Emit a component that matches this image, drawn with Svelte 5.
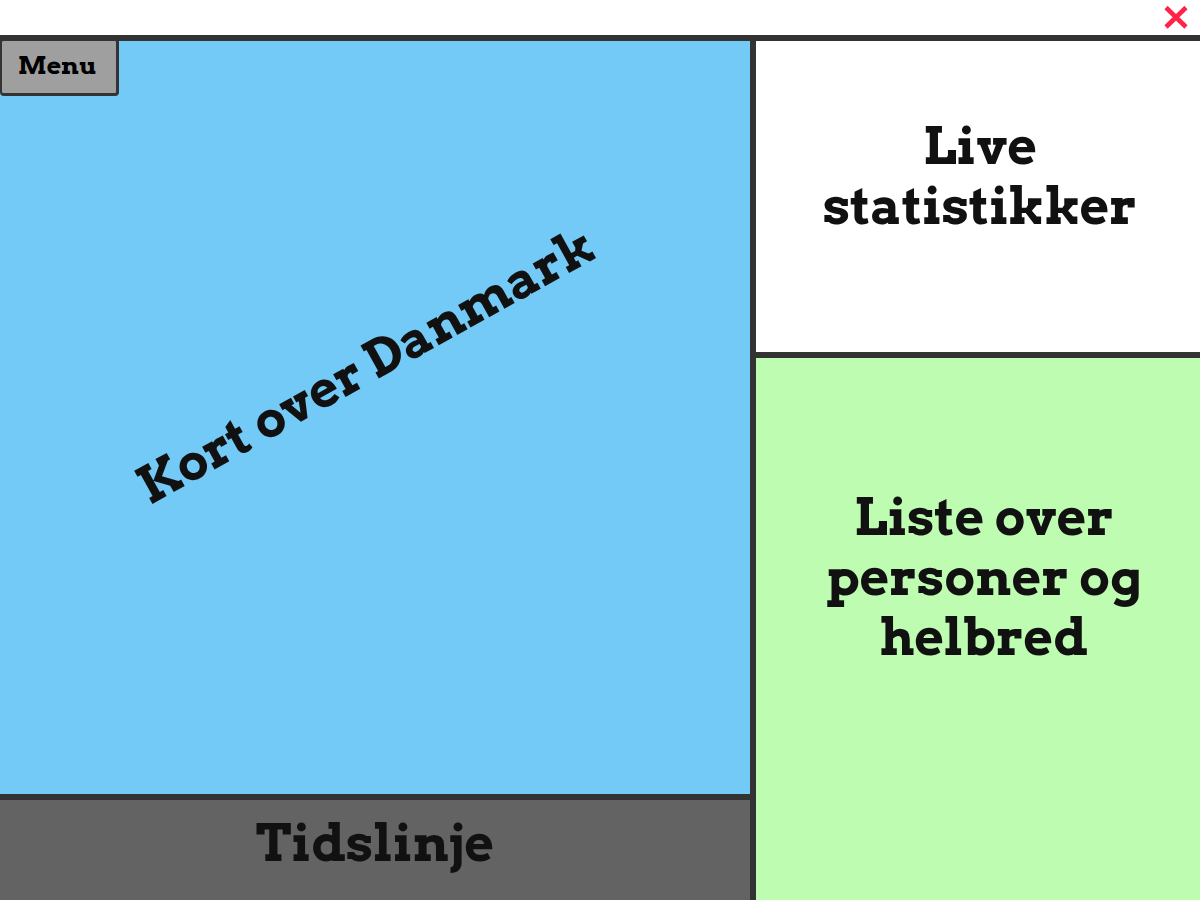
<script>
  const close = () => window.close();
</script>

<div class="page">
  <header class="titlebar">
    <button class="close" aria-label="Luk" onclick={close}>
      <svg viewBox="0 0 24 24" width="24" height="24" aria-hidden="true">
        <path d="M2 1.5 22 21M22 1.5 2 21" />
      </svg>
    </button>
  </header>
  <div class="workspace">
    <div class="main">
      <section class="map">
        <button class="menu">Menu</button>
        <h1 class="map-title">Kort over Danmark</h1>
      </section>
      <section class="timeline">
        <h1>Tidslinje</h1>
      </section>
    </div>
    <aside class="side">
      <section class="stats">
        <h1>Live statistikker</h1>
      </section>
      <section class="people">
        <h1>Liste over personer og helbred</h1>
      </section>
    </aside>
  </div>
</div>

<style>
  :global(body) {
    margin: 0;
  }

  .page {
    box-sizing: border-box;
    min-height: 100vh;
    display: flex;
    flex-direction: column;
    background: #fff;
    color: #111;
    font-family: Arvo, "DejaVu Serif", serif;
  }

  .titlebar {
    display: flex;
    justify-content: flex-end;
    align-items: center;
    height: 35px;
    padding-right: 12px;
    border-bottom: 6px solid #333;
  }

  .close {
    display: flex;
    padding: 0;
    border: 0;
    background: none;
    cursor: pointer;
  }

  .close path {
    fill: none;
    stroke: #ff2348;
    stroke-width: 4.6;
  }

  .workspace {
    flex: 1;
    display: grid;
    grid-template-columns: 5fr 3fr;
  }

  .main {
    display: flex;
    flex-direction: column;
    min-width: 0;
  }

  .side {
    display: grid;
    grid-template-rows: 317fr 542fr;
    min-width: 0;
    border-left: 6px solid #333;
  }

  h1 {
    margin: 0;
    font-size: 51px;
    line-height: 60px;
    font-weight: 700;
    text-align: center;
  }

  .map {
    position: relative;
    flex: 1;
    display: flex;
    align-items: center;
    justify-content: center;
    padding-bottom: 106px;
    padding-right: 18px;
    background: #74caf6;
  }

  .map-title {
    white-space: nowrap;
    transform: rotate(-29deg);
  }

  .menu {
    position: absolute;
    top: -3px;
    left: 0;
    padding: 12px 20px 16px 16px;
    border: 3px solid #333;
    border-left-width: 2px;
    border-radius: 4px;
    background: #9f9f9f;
    color: #000;
    font-family: inherit;
    font-size: 25px;
    line-height: 24px;
    font-weight: 700;
    cursor: pointer;
  }

  .timeline {
    box-sizing: border-box;
    height: 106px;
    padding-top: 13px;
    border-top: 6px solid #333;
    background: #636363;
  }

  .stats {
    display: flex;
    align-items: center;
    justify-content: center;
    padding: 0 56px 42px 60px;
    border-bottom: 6px solid #333;
  }

  .people {
    display: flex;
    align-items: center;
    justify-content: center;
    padding: 0 44px 104px 56px;
    background: #befdb1;
  }
</style>
